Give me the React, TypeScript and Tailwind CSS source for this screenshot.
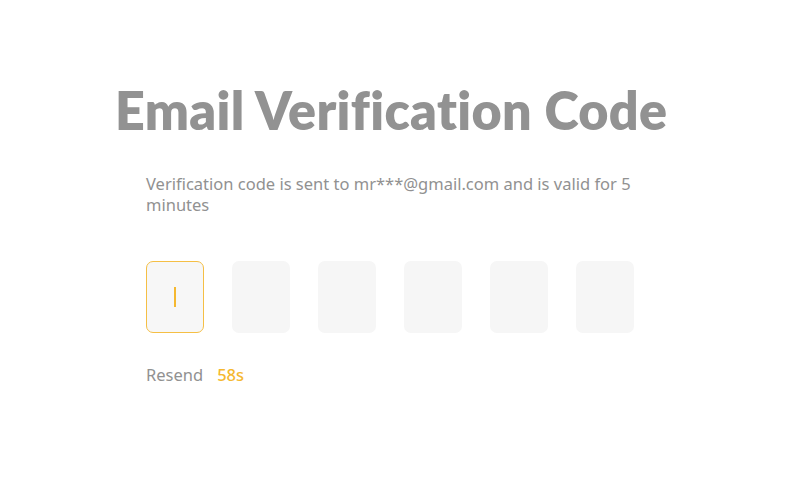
export default function App() {
  const boxes = [0, 1, 2, 3, 4, 5];
  return (
    <div className="w-[800px] h-[500px] bg-white flex flex-col" style={{ fontFamily: '"Noto Sans", "Open Sans", sans-serif' }}>
      <h1
        className="mt-[80px] ml-[115px] text-[52px] leading-[60px] font-extrabold text-[#929292] tracking-[0.35px]"
        style={{ fontFamily: 'Lato, "Liberation Sans", sans-serif' }}
      >
        Email Verification Code
      </h1>

      <p className="mt-[33px] ml-[146px] w-[500px] text-[16.5px] leading-[21px] text-[#919191]">
        Verification code is sent to mr***@gmail.com and is valid for 5 minutes
      </p>

      {/* code inputs */}
      <div className="mt-[46px] ml-[146px] flex gap-[28px]">
        {boxes.map((i) =>
          i === 0 ? (
            <div
              key={i}
              className="w-[58px] h-[72px] rounded-[7px] border border-[#f5bf45] bg-[#f7f7f7] flex items-center justify-center"
            >
              <span className="block w-[2px] h-[20px] bg-[#f5b830]" />
            </div>
          ) : (
            <div key={i} className="w-[58px] h-[72px] rounded-[7px] bg-[#f6f6f6]" />
          )
        )}
      </div>

      <div className="mt-[32px] ml-[146px] flex gap-[14px] text-[16.5px] leading-[20px]">
        <span className="text-[#919191]">Resend</span>
        <span className="text-[#f5b830] font-medium">58s</span>
      </div>
    </div>
  );
}
